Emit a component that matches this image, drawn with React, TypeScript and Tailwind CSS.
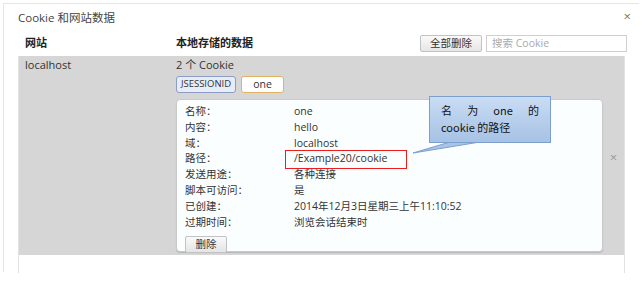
export default function App() {
  const rows: [string, string][] = [
    ['名称：', 'one'],
    ['内容：', 'hello'],
    ['域：', 'localhost'],
    ['路径：', '/Example20/cookie'],
    ['发送用途：', '各种连接'],
    ['脚本可访问：', '是'],
    ['已创建：', '2014年12月3日星期三上午11:10:52'],
    ['过期时间：', '浏览会话结束时'],
  ]

  return (
    <div
      className="relative h-[287px] w-[642px] overflow-hidden bg-white text-[#333]"
      style={{ fontFamily: '"Open Sans", "Noto Sans CJK SC", sans-serif' }}
    >
      <div className="ml-[3px] mt-[3px] h-[269px] w-[636px] border-l border-t border-[#e6e6e6]">
        {/* Title */}
        <div className="relative h-[21px] pl-[14px] pt-[7px] text-[11.5px] leading-[14px] text-[#444]">
          Cookie 和网站数据
          <span className="absolute right-[8px] top-[6px] text-[13px] leading-none text-[#777]">×</span>
        </div>

        {/* Header */}
        <div className="mt-[9px] flex h-[19px] items-center pl-[14px] pr-[12px]">
          <div className="w-[158px] pl-[7px] text-[11px] font-bold text-[#222]">网站</div>
          <div className="flex-1 text-[11px] font-bold text-[#222]">本地存储的数据</div>
          <button className="h-[17px] w-[62px] rounded-[2px] border border-[#c2c2c2] bg-gradient-to-b from-[#fafafa] to-[#e6e6e6] text-[10.5px] leading-none text-[#333]">
            全部删除
          </button>
          <div className="ml-[4px] flex h-[17px] w-[141px] items-center border border-[#cfcfcf] bg-white pl-[5px] text-[10.5px] text-[#aaa]">
            搜索 Cookie
          </div>
        </div>

        {/* List */}
        <div className="ml-[14px] mt-[3px] h-[217px] w-[607px] border-x border-[#e2e2e2]">
          <div className="flex h-[199px] bg-[#d6d6d6]">
            <div className="w-[157px] pl-[6px] pt-[1px] text-[11px] leading-[15px] text-[#333]">localhost</div>
            <div className="flex-1 pt-[1px]">
              <div className="text-[11px] leading-[15px] text-[#333]">2 个 Cookie</div>
              <div className="mt-[4px] flex gap-[5px]">
                <span className="flex h-[17px] w-[60px] items-center justify-center rounded-[3px] border border-[#8b9dc3] bg-[#e6edf8] text-[9.5px] text-[#333]">
                  JSESSIONID
                </span>
                <span className="flex h-[17px] w-[43px] items-center justify-center rounded-[3px] border border-[#e0b463] bg-white text-[10.5px] text-[#333]">
                  one
                </span>
              </div>
              <div className="mt-[6px] flex">
                <div className="h-[153px] w-[427px] rounded-[4px] border border-[#c9c9c9] bg-[#fbfefe] pl-[8px] pt-[4px] shadow-[0_1px_1px_rgba(0,0,0,0.15)]">
                  {rows.map(([k, v]) => (
                    <div key={k} className="flex h-[15.8px] items-center text-[10.5px] text-[#333]">
                      <span className="w-[109px]">{k}</span>
                      <span>{v}</span>
                    </div>
                  ))}
                  <button className="mt-[2px] h-[17px] w-[42px] rounded-[2px] border border-[#c2c2c2] bg-gradient-to-b from-[#fafafa] to-[#e4e4e4] text-[10.5px] leading-none text-[#333]">
                    删除
                  </button>
                </div>
                <div className="flex flex-1 items-center justify-center pb-[36px] text-[13px] text-[#9a9a9a]">×</div>
              </div>
            </div>
          </div>
        </div>
      </div>

      {/* Annotation: red box */}
      <div className="absolute left-[285px] top-[150px] h-[19px] w-[122px] border-[1.5px] border-[#ee1c1c]" />

      {/* Annotation: callout */}
      <svg className="absolute left-[410px] top-[138px]" width="80" height="20" viewBox="0 0 80 20">
        <polygon points="40,4 70,4 3,15" fill="#a9c4e6" stroke="#7d9fcc" strokeWidth="1" />
      </svg>
      <div
        className="absolute left-[429px] top-[96px] h-[47px] w-[122px] border border-[#7d9fcc] bg-gradient-to-b from-[#c9dcf3] to-[#a6c2e5] pl-[11px] pt-[5px] text-[11px] leading-[17px] text-[#111]"
        style={{ fontFamily: '"Noto Sans CJK SC", "DejaVu Sans", sans-serif' }}
      >
        <div className="flex w-[98px] justify-between">
          <span>名</span>
          <span>为</span>
          <span>one</span>
          <span>的</span>
        </div>
        <div>cookie 的路径</div>
      </div>
    </div>
  )
}
